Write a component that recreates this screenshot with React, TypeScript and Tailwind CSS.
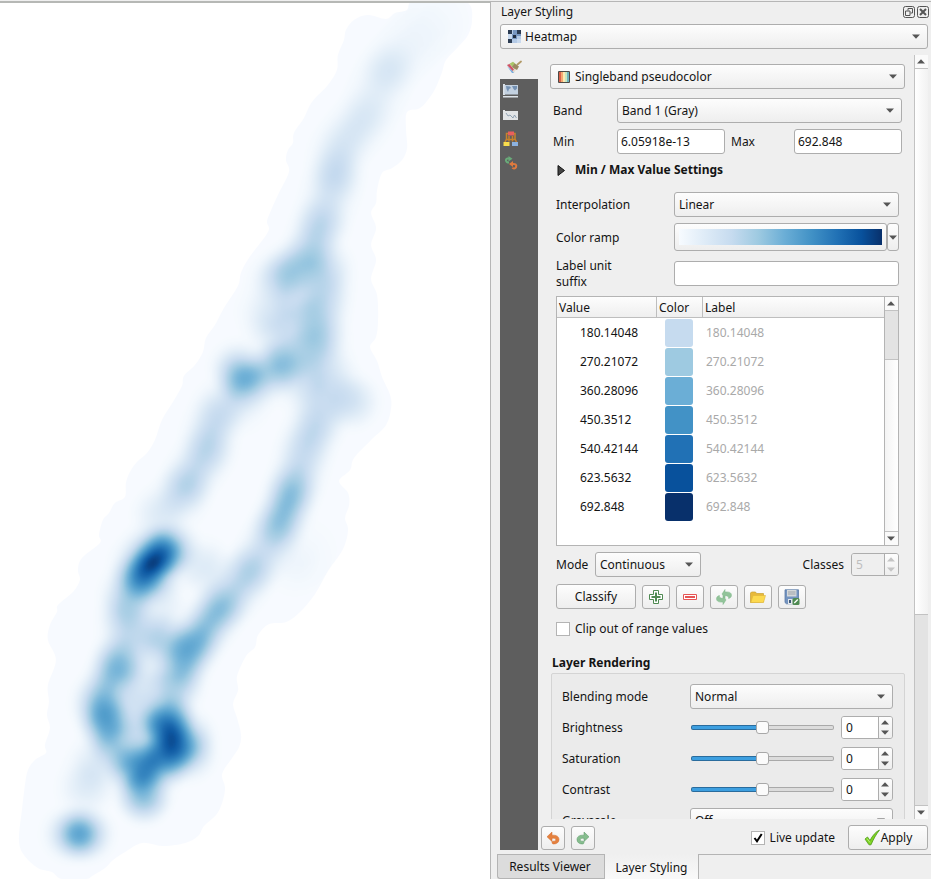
import { useId, useState } from "react";
import type { ReactNode } from "react";

/* ---------- heatmap ---------- */

type Point = [number, number];
type Sample = [number, number, number];

const KERNEL_RADIUS = 32;

// x, y and relative density (0..1) at points of the network
const TRACKS: Sample[][] = [
  [[437, 20, 0.02], [410, 45, 0.04], [388, 69, 0.16], [376, 95, 0.1], [364, 120, 0.15], [350, 135, 0.15], [338, 152, 0.19], [335, 178, 0.26], [329, 198, 0.17], [323, 217, 0.27], [316, 238, 0.29], [307, 260, 0.38], [296, 267, 0.37], [283, 276, 0.38], [274, 286, 0.22]],
  [[325, 265, 0.29], [325, 285, 0.27], [322, 305, 0.3], [319, 325, 0.33], [321, 342, 0.37], [308, 350, 0.32], [296, 356, 0.36], [281, 364, 0.42], [262, 380, 0.35]],
  [[300, 320, 0.25], [290, 325, 0.24], [265, 312, 0.14]],
  [[298, 300, 0.21]],
  [[283, 343, 0.21], [270, 335, 0.15]],
  [[237, 368, 0.4], [243, 380, 0.52], [248, 392, 0.38]],
  [[322, 358, 0.24], [328, 372, 0.2], [330, 385, 0.21], [352, 402, 0.2]],
  [[305, 378, 0.21], [308, 395, 0.17]],
  [[330, 385, 0.21], [325, 405, 0.22], [318, 422, 0.25], [308, 440, 0.27], [302, 460, 0.23], [297, 478, 0.34], [291, 493, 0.44], [285, 512, 0.45], [275, 532, 0.38], [266, 550, 0.22], [250, 571, 0.33], [238, 588, 0.29], [220, 608, 0.45], [208, 624, 0.42], [195, 643, 0.53], [182, 664, 0.5], [178, 680, 0.38], [173, 696, 0.34]],
  [[240, 405, 0.2], [222, 405, 0.22], [211, 430, 0.26], [207, 453, 0.29], [195, 470, 0.25], [185, 487, 0.33], [180, 500, 0.22], [160, 515, 0.13]],
  [[174, 548, 0.64], [163, 551, 0.84], [156, 558, 0.95], [151, 564, 1], [144, 573, 0.86], [138, 579, 0.68]],
  [[136, 566, 0.66], [150, 549, 0.66]],
  [[152, 579, 0.72], [168, 561, 0.66]],
  [[186, 556, 0.2], [205, 568, 0.11]],
  [[128, 590, 0.42], [127, 604, 0.37], [126, 630, 0.27], [147, 640, 0.27], [165, 640, 0.33]],
  [[124, 650, 0.34], [117, 666, 0.5], [111, 684, 0.4], [98, 702, 0.5], [103, 716, 0.58], [109, 733, 0.54], [118, 748, 0.36]],
  [[160, 605, 0.11]],
  [[145, 680, 0.15], [135, 715, 0.21]],
  [[168, 712, 0.58], [170, 732, 0.9], [175, 745, 0.82], [170, 757, 0.76], [160, 766, 0.7], [148, 765, 0.62], [133, 765, 0.68], [136, 780, 0.56], [144, 797, 0.48]],
  [[155, 732, 0.62], [156, 748, 0.62]],
  [[188, 735, 0.6], [189, 755, 0.56]],
  [[150, 783, 0.54]],
  [[98, 760, 0.17], [85, 790, 0.13]],
  [[70, 834, 0.46], [79, 834, 0.6], [87, 834, 0.48]],
  [[295, 565, 0.04], [305, 550, 0.03]],
];

// Fill each track in at regular steps
const SAMPLES: Sample[] = TRACKS.flatMap((track) =>
  track.flatMap((a, i) => {
    const b = track[i + 1];
    if (!b) return [a];
    const steps = Math.max(1, Math.round(Math.hypot(b[0] - a[0], b[1] - a[1]) / 8));
    return Array.from({ length: steps }, (_, k): Sample => {
      const f = k / steps;
      return [a[0] + (b[0] - a[0]) * f, a[1] + (b[1] - a[1]) * f, a[2] + (b[2] - a[2]) * f];
    });
  }),
);

const kernel = (a: Sample, b: Sample) => {
  const q = ((a[0] - b[0]) ** 2 + (a[1] - b[1]) ** 2) / KERNEL_RADIUS ** 2;
  return q < 1 ? (1 - q) ** 2 : 0;
};

// Multiplicative updates keep the weights positive and the surface smooth
const WEIGHTS: number[] = (() => {
  const K = SAMPLES.map((s) => SAMPLES.map((t) => kernel(s, t)));
  const norm = K.map((row) => row.reduce((a, b) => a + b, 0));
  let w = SAMPLES.map((s, i) => s[2] / norm[i]);
  for (let pass = 0; pass < 120; pass++) {
    const ratio = K.map((row, i) => SAMPLES[i][2] / row.reduce((a, k, j) => a + k * w[j], 0));
    w = w.map((v, i) => (v * K[i].reduce((a, k, j) => a + k * ratio[j], 0)) / norm[i]);
  }
  return w;
})();

const OUTLINE: Point[] = [
  [412, 1], [440, -8], [468, 3], [472, 20], [468, 35], [458, 47], [446, 60], [442, 72], [436, 87], [430, 97], [420, 108], [407, 112],
  [406, 130], [407, 148], [402, 160], [392, 168], [382, 173], [377, 190], [376, 203], [371, 213], [376, 228],
  [371, 245], [376, 260], [371, 279], [377, 295], [378, 320], [376, 337], [370, 347], [377, 361], [382, 377],
  [390, 395], [391, 408], [386, 425], [371, 440], [354, 458], [350, 470], [339, 481], [348, 493], [349, 505],
  [345, 518], [348, 530], [343, 549], [328, 571], [315, 594], [300, 612], [286, 622], [269, 624], [258, 635],
  [255, 647], [246, 656], [237, 676], [238, 690], [233, 704], [237, 718], [241, 735], [239, 747], [232, 758],
  [222, 774], [225, 788], [222, 803], [216, 815], [204, 826], [198, 836], [185, 843], [163, 846], [142, 843],
  [125, 852], [113, 860], [105, 868], [92, 876], [86, 879], [62, 879], [52, 872], [38, 868], [24, 855], [19, 840],
  [22, 810], [25, 785], [28, 770], [35, 760], [46, 753], [45, 745], [50, 728], [47, 715], [49, 702], [48, 685],
  [56, 660], [48, 640], [50, 625], [57, 612], [58, 605], [73, 592], [80, 580], [78, 570], [82, 558], [100, 543],
  [99, 535], [103, 520], [109, 513], [115, 503], [125, 497], [126, 483], [130, 472], [137, 462], [147, 453],
  [155, 440], [162, 420], [173, 402], [182, 386], [184, 376], [195, 365], [203, 352], [206, 338], [215, 325],
  [224, 308], [238, 286], [241, 273], [249, 258], [268, 232], [267, 222], [270, 213], [278, 195], [289, 172],
  [286, 160], [288, 150], [293, 143], [294, 133], [304, 118], [312, 102], [328, 85], [337, 70], [338, 55],
  [344, 40], [346, 30], [354, 20], [368, 15], [386, 19], [395, 13], [407, 10],
];

const outlinePath = (() => {
  const n = OUTLINE.length;
  const at = (i: number) => OUTLINE[(i + n) % n];
  let d = `M${at(0)[0]} ${at(0)[1]}`;
  for (let i = 0; i < n; i++) {
    const [p0, p1, p2, p3] = [at(i - 1), at(i), at(i + 1), at(i + 2)];
    d += `C${p1[0] + (p2[0] - p0[0]) / 6} ${p1[1] + (p2[1] - p0[1]) / 6} ${p2[0] - (p3[0] - p1[0]) / 6} ${p2[1] - (p3[1] - p1[1]) / 6} ${p2[0]} ${p2[1]}`;
  }
  return d + "Z";
})();

const STOPS = [0, 0.1, 0.2, 0.3, 0.4, 0.5, 0.6, 0.7, 0.8, 0.9, 1];

function Heatmap() {
  return (
    <svg className="block h-[876px] w-[490px] shrink-0" viewBox="0 3 490 876" role="img" aria-label="Heatmap layer">
      <defs>
        <radialGradient id="kernel">
          {STOPS.map((r) => (
            <stop key={r} offset={r} stopColor="#fff" stopOpacity={(1 - r * r) ** 2} />
          ))}
        </radialGradient>
        <clipPath id="extent">
          <path d={outlinePath} />
        </clipPath>
        <filter id="blues" x="0" y="0" width="490" height="880" filterUnits="userSpaceOnUse" colorInterpolationFilters="sRGB">
          <feGaussianBlur stdDeviation="2" />
          <feComponentTransfer>
            <feFuncR type="table" tableValues=".969 .875 .784 .639 .451 .290 .161 .055 .031" />
            <feFuncG type="table" tableValues=".984 .925 .863 .800 .702 .596 .475 .345 .188" />
            <feFuncB type="table" tableValues="1 .969 .941 .890 .847 .788 .725 .635 .420" />
          </feComponentTransfer>
        </filter>
      </defs>
      <g clipPath="url(#extent)">
        <g filter="url(#blues)">
          <rect x="-20" y="-20" width="530" height="920" fill="#000" />
          {SAMPLES.map(([x, y], i) =>
            WEIGHTS[i] > 0.004 ? (
              <circle key={i} className="mix-blend-plus-lighter" cx={x} cy={y} r={KERNEL_RADIUS} fill="url(#kernel)" opacity={WEIGHTS[i]} />
            ) : null,
          )}
        </g>
      </g>
    </svg>
  );
}

/* ---------- controls ---------- */

const FRAME = "rounded-[3px] border border-[#adadad]";
const RAISED = `${FRAME} bg-linear-to-b from-[#fdfdfd] to-[#eeeeee]`;

function Arrow({ up = false, pale = false }: { up?: boolean; pale?: boolean }) {
  return (
    <svg className={pale ? "h-[5px] w-2 text-[#c4c4c4]" : "h-[5px] w-2 text-[#555]"} viewBox="0 0 8 5" fill="currentColor" aria-hidden="true">
      <path d={up ? "M0 4.500 4 .3 8 4.500Z" : "M0 .5 4 4.700 8 .5Z"} />
    </svg>
  );
}

function Combo({ id, label, value, icon, className = "" }: { id?: string; label?: string; value: string; icon?: ReactNode; className?: string }) {
  return (
    <div className={`relative h-[25px] ${className}`}>
      <select id={id} aria-label={label} defaultValue={value} className={`block size-full appearance-none ${RAISED} ${icon ? "pl-6" : "pl-1"} pr-6`}>
        <option>{value}</option>
      </select>
      {icon && <span className="pointer-events-none absolute inset-y-0 left-2 flex items-center">{icon}</span>}
      <span className="pointer-events-none absolute inset-y-0 right-2 flex items-center">
        <Arrow />
      </span>
    </div>
  );
}

function TextBox({ id, value = "", className = "" }: { id: string; value?: string; className?: string }) {
  return <input id={id} type="text" defaultValue={value} className={`block h-[25px] min-w-0 bg-white px-[3px] ${FRAME} ${className}`} />;
}

function Spin({ id, label, value, disabled = false, className = "" }: { id?: string; label?: string; value: string; disabled?: boolean; className?: string }) {
  return (
    <div className={`flex h-[23px] overflow-hidden ${FRAME} ${className}`}>
      <input
        id={id}
        aria-label={label}
        type="text"
        disabled={disabled}
        defaultValue={value}
        className="min-w-0 flex-1 bg-white px-1 disabled:bg-[#efefef] disabled:text-[#bebebe]"
      />
      <div className="flex w-[14px] flex-col border-l border-[#adadad] bg-linear-to-b from-[#fdfdfd] to-[#eeeeee] pr-px">
        <button type="button" aria-label="Increase" disabled={disabled} className="flex flex-1 items-center justify-center">
          <Arrow up pale={disabled} />
        </button>
        <button type="button" aria-label="Decrease" disabled={disabled} className="flex flex-1 items-center justify-center">
          <Arrow pale={disabled} />
        </button>
      </div>
    </div>
  );
}

function Tick({ label, checked = false }: { label: string; checked?: boolean }) {
  const [on, setOn] = useState(checked);
  const id = useId();
  return (
    <div className="flex items-center gap-[5px]">
      <span className="relative flex size-[14px]">
        <input id={id} type="checkbox" checked={on} onChange={() => setOn(!on)} className="size-[14px] appearance-none border border-[#b4b4b4] bg-white" />
        {on && (
          <svg className="pointer-events-none absolute inset-0 size-[14px]" viewBox="0 0 14 14" fill="none" stroke="#000" strokeWidth="2" aria-hidden="true">
            <path d="M3.500 7 6 10.300 10.700 3" />
          </svg>
        )}
      </span>
      <label htmlFor={id}>{label}</label>
    </div>
  );
}

function IconButton({ label, className, children }: { label: string; className: string; children: ReactNode }) {
  return (
    <button type="button" aria-label={label} className={`flex h-6 items-center justify-center ${RAISED} ${className}`}>
      {children}
    </button>
  );
}

function ScrollButton({ up = false }: { up?: boolean }) {
  return (
    <button
      type="button"
      aria-label={up ? "Scroll up" : "Scroll down"}
      className={`flex h-[14px] shrink-0 items-center justify-center bg-[#fafafa] pr-px ${up ? "border-b border-[#c2c2c2]" : "border-t border-[#c2c2c2]"}`}
    >
      <Arrow up={up} />
    </button>
  );
}

/* ---------- icons ---------- */

const RasterIcon = () => (
  <svg className="size-[13px]" viewBox="0 0 13 13" aria-hidden="true">
    <path fill="#b4cae6" d="M0 0h13v13H0z" />
    <path fill="#2b3b52" d="M0 0h4v4H0zM9 0h4v4H9zM0 9h4v4H0z" />
    <path fill="#7796c0" d="M5 0h4v4H5zM4 4h5v5H4zM9 4h4v2H9z" />
    <path fill="#c9daef" d="M0 4h4v5H0zM9 9h4v4H9z" />
    <path fill="#1f2c40" d="M5 5h3v3H5z" />
  </svg>
);

const RampIcon = () => (
  <svg className="size-3" viewBox="0 0 12 12" aria-hidden="true">
    <path fill="#d9604a" d="M1 1h2v10H1z" />
    <path fill="#f3a972" d="M3 1h2v10H3z" />
    <path fill="#fbe9b0" d="M5 1h2v10H5z" />
    <path fill="#c5e6c0" d="M7 1h2v10H7z" />
    <path fill="#6fb4bd" d="M9 1h2v10H9z" />
    <path fill="none" stroke="#4d4a45" d="M.5.5h11v11H.5z" />
  </svg>
);

const BrushIcon = () => (
  <svg className="h-[14px] w-4" viewBox="0 0 16 14" aria-hidden="true">
    <path fill="#e3ddcf" d="M1 5 7 2l5 4-4 7z" />
    <path fill="#cf5268" d="m1 5 2.500-1L8 9.500 6.500 11z" />
    <path fill="#79acdd" d="m1 6 5.500 5L8 13H6z" />
    <path fill="#a9c66a" d="m3.500 3.700 3.500-2L12 6l-3.500 3z" />
    <path fill="none" stroke="#b19a68" strokeWidth="1.800" strokeLinecap="round" d="m11.500 4.500 3.500-3" />
    <path fill="#9c8a63" d="m8.500 3.500 4.500 3-2 3.500-5-3z" />
  </svg>
);

const TransparencyIcon = () => (
  <svg className="h-[14px] w-4" viewBox="0 0 16 14" aria-hidden="true">
    <path fill="#dde3e9" d="M0 0h2v11H0zM0 12h15v1.500H0z" />
    <path fill="#c3d1e0" d="M1.500 1H15v9.500H1.500z" />
    <path fill="#7491b3" d="m3 2 4 .5 1 1.500-2 1-1 3-1.500-3zM9 2h5v2.500L12 6.500 10.500 5z" />
  </svg>
);

const HistogramIcon = () => (
  <svg className="h-3 w-4" viewBox="0 0 16 12" aria-hidden="true">
    <path fill="#e2e4e6" d="M0 1h2v10H0zM2 2h13v9H2z" />
    <path fill="none" stroke="#7d93a8" strokeWidth=".8" d="m3 4 2 3 2-1 3 3 1.500-3 2 3" />
  </svg>
);

const PyramidIcon = () => (
  <svg className="size-4" viewBox="0 0 16 16" aria-hidden="true">
    <path fill="none" stroke="#c8822c" strokeWidth="1.500" d="M5 2.500H3.500V8L2 11M10.500 2.500H12V8l1.500 3M6 5v5.500M9.500 5v5.500M3.500 8.500H12" />
    <path fill="#ea5f5c" d="M5 .5h6v4H5z" />
    <path fill="#f7dc4c" d="M.5 11h6v4h-6z" />
    <path fill="#8cb2e0" d="M9 11h6v4H9z" />
  </svg>
);

const HistoryIcon = () => (
  <svg className="ml-px size-[14px]" viewBox="0 0 14 14" fill="none" strokeWidth="2" aria-hidden="true">
    <path stroke="#69aa79" d="M5 6.500C1.500 6.500 1 3 3.500 2.500H5" />
    <path fill="#69aa79" d="M4.500 0 8.500 2.700 4.500 5.400z" />
    <path stroke="#e07a3e" d="M8 8c3.500-.5 5 1 4 3.300-.8 1.500-3 1.500-3.500.3" />
    <path fill="#e07a3e" d="M9 5v6L5 8z" />
  </svg>
);

const PlusIcon = () => (
  <svg className="size-4" viewBox="0 0 16 16" aria-hidden="true">
    <path fill="#fff" stroke="#4f8a52" d="M5.500 1.500h5v4h4v5h-4v4h-5v-4h-4v-5h4z" />
    <path stroke="#4f8a52" strokeWidth="2" d="M8 3.500v9M3.500 8h9" />
  </svg>
);

const MinusIcon = () => (
  <svg className="size-4" viewBox="0 0 16 16" aria-hidden="true">
    <path fill="#fff" stroke="#e65555" d="M1.500 5.500h13v5h-13z" />
    <path fill="#e65555" d="M3 7h10v2H3z" />
  </svg>
);

const SwapIcon = () => (
  <svg className="size-4" viewBox="0 0 16 16" aria-hidden="true">
    <path
      fill="#92c49a"
      stroke="#7fb688"
      strokeWidth=".5"
      d="M7 15.500V13C3.500 13.500.5 12.500.5 9.800.5 7.800 2 6.800 3.500 6.600c-.6 1.800.8 2.900 3.500 2.700V6.800l3 4.200zM9 .5V3c3.500-.5 6.500.5 6.500 3.200 0 2-1.500 3-3 3.200.6-1.800-.8-2.900-3.500-2.700v2.500L6 5z"
    />
  </svg>
);

const FolderIcon = () => (
  <svg className="size-4" viewBox="0 0 16 16" aria-hidden="true">
    <path fill="#e8b93a" stroke="#c9a030" strokeWidth=".7" d="M.5 13.500V4l1-1h4l1 1.500h7V13z" />
    <path fill="#fcd94f" stroke="#dfb53a" strokeWidth=".6" d="M.8 13.500 3 6.500h12.500l-2 7z" />
  </svg>
);

const SaveIcon = () => (
  <svg className="size-4" viewBox="0 0 16 16" aria-hidden="true">
    <path fill="#7494c0" stroke="#5a7aa6" strokeWidth=".8" d="M1 .8h13.500v14H2.500L1 13.500z" />
    <path fill="#d5d8da" d="M3 1h9.500v6.500H3z" />
    <path stroke="#8f979e" strokeWidth=".8" d="M4 3h7.500M4 5h7.500" />
    <path fill="#e4e8ec" d="M4 10h6v5H4z" />
    <path fill="#3f5878" d="M5 11h2v3H5z" />
    <rect x="8.500" y="9" width="7" height="7" rx="1.500" fill="#4f8a52" />
    <path stroke="#fff" strokeWidth="1.300" d="m10.300 14 3.500-3.500" />
  </svg>
);

const UndoIcon = ({ redo = false }: { redo?: boolean }) => (
  <svg className={redo ? "size-[14px] -scale-x-100 text-[#86bd8e]" : "size-[14px] text-[#e5813f]"} viewBox="0 0 14 14" aria-hidden="true">
    <path
      fill="currentColor"
      stroke={redo ? "#559563" : "#d06a2b"}
      strokeWidth=".5"
      d="M6 1v3.200c4.500-.4 7 1.300 7 4.300 0 2.800-2.200 4.500-5.500 4.500-.9 0-1.500-.7-1.500-1.500s.6-1.300 1.400-1.300c1.500 0 2.400-.5 2.400-1.500 0-1.100-1.300-1.600-3.800-1.400v3.200L1 5.800z"
    />
  </svg>
);

const ApplyIcon = () => (
  <svg className="size-[17px]" viewBox="0 0 17 17" aria-hidden="true">
    <path fill="#7ed321" stroke="#4f9a1c" strokeWidth=".8" d="M1 10 3.500 8l2.500 3.500C8.500 6.500 11.500 3 15.500 1 12 5.500 9.500 10 7 15.800H5z" />
    <path fill="none" stroke="#b5ec7c" d="m3 9.500 3 4" />
  </svg>
);

/* ---------- panel sections ---------- */

const CLASSES: [string, string][] = [
  ["180.14048", "bg-[#c6dbef]"],
  ["270.21072", "bg-[#9ecae1]"],
  ["360.28096", "bg-[#6baed6]"],
  ["450.3512", "bg-[#4292c6]"],
  ["540.42144", "bg-[#2171b5]"],
  ["623.5632", "bg-[#08519c]"],
  ["692.848", "bg-[#08306b]"],
];

function ClassTable() {
  return (
    <div className="flex h-[250px] border border-[#b4b4b4] bg-white">
      <div className="min-w-0 flex-1 overflow-hidden">
        <table className="w-full table-fixed border-separate border-spacing-0 text-left">
          <thead className="bg-linear-to-b from-[#fdfdfd] to-[#eeeeee]">
            <tr className="h-[21px]">
              <th className="w-[100px] border-r border-b border-[#bebebe] px-[2px] pt-px font-normal">Value</th>
              <th className="w-[46px] border-r border-b border-[#bebebe] px-[2px] pt-px font-normal">Color</th>
              <th className="border-b border-[#bebebe] px-[2px] pt-px font-normal">Label</th>
            </tr>
          </thead>
          <tbody>
            {CLASSES.map(([value, swatch]) => (
              <tr key={value} className="h-[29px]">
                <td className="pl-[23px]">{value}</td>
                <td className="pt-px pl-2">
                  <div className={`size-7 rounded-[3px] ${swatch}`} />
                </td>
                <td className="pl-[3px] text-[#a9a9a9]">{value}</td>
              </tr>
            ))}
          </tbody>
        </table>
      </div>
      <div className="flex w-[14px] flex-col border-l border-[#b4b4b4]">
        <ScrollButton up />
        <div className="h-[49px] border-b border-[#c2c2c2] bg-[#e3e3e3]" />
        <div className="flex-1 bg-linear-to-r from-[#f4f4f4] to-white" />
        <ScrollButton />
      </div>
    </div>
  );
}

function SliderRow({ name }: { name: string }) {
  const [value, setValue] = useState(0);
  const id = useId();
  return (
    <div className="flex h-[23px] items-center">
      <label htmlFor={id} className="w-32">{name}</label>
      <input
        id={id}
        type="range"
        min={-100}
        max={100}
        value={value}
        onChange={(e) => setValue(Number(e.target.value))}
        className="mx-px h-[17px] min-w-0 flex-1 appearance-none bg-transparent [&::-webkit-slider-runnable-track]:h-[5px] [&::-webkit-slider-runnable-track]:rounded-[2px] [&::-webkit-slider-runnable-track]:border [&::-webkit-slider-runnable-track]:border-transparent [&::-webkit-slider-runnable-track]:bg-[linear-gradient(90deg,#3d9fe0_50%,#dcdcdc_50%),linear-gradient(90deg,#2a6c9d_50%,#a9a9a9_50%)] [&::-webkit-slider-runnable-track]:[background-clip:padding-box,border-box] [&::-webkit-slider-runnable-track]:[background-origin:border-box] [&::-webkit-slider-thumb]:mt-[-5px] [&::-webkit-slider-thumb]:size-[13px] [&::-webkit-slider-thumb]:appearance-none [&::-webkit-slider-thumb]:rounded-[3px] [&::-webkit-slider-thumb]:border [&::-webkit-slider-thumb]:border-[#a8a8a8] [&::-webkit-slider-thumb]:bg-[#fbfbfb]"
      />
      <Spin label={`${name} value`} value="0" className="ml-[6px] w-[52px]" />
    </div>
  );
}

function RendererForm() {
  return (
    <div className="min-w-0 flex-1 overflow-hidden pt-[9px] pr-[9px] pl-3">
      <Combo label="Render type" value="Singleband pseudocolor" icon={<RampIcon />} />
      <div className="mt-[9px] flex items-center pr-[3px] pl-[3px]">
        <label htmlFor="band" className="w-16">Band</label>
        <Combo id="band" value="Band 1 (Gray)" className="flex-1" />
      </div>
      <div className="mt-[6px] flex items-center pr-[3px] pl-[3px]">
        <label htmlFor="min" className="w-16">Min</label>
        <TextBox id="min" value="6.05918e-13" className="w-[108px]" />
        <label htmlFor="max" className="flex-1 pl-[6px]">Max</label>
        <TextBox id="max" value="692.848" className="w-[108px]" />
      </div>
      <button type="button" className="mt-2 flex h-4 items-center gap-[9px] pl-[7px] font-bold">
        <svg className="h-[13px] w-[9px]" viewBox="0 0 9 13" fill="#444" stroke="#111" aria-hidden="true">
          <path d="M1 1.500v10l6.500-5z" />
        </svg>
        Min / Max Value Settings
      </button>

      <div className="mt-[14px] pr-[6px] pl-[6px]">
        <div className="flex items-center">
          <label htmlFor="interpolation" className="w-[118px]">Interpolation</label>
          <Combo id="interpolation" value="Linear" className="flex-1" />
        </div>
        <div className="mt-[6px] flex h-7 items-center">
          <span className="w-[118px] pt-px">Color ramp</span>
          <button type="button" aria-label="Edit color ramp" className={`flex h-7 flex-1 px-1 py-[5px] ${RAISED}`}>
            <span className="h-4 flex-1 bg-[linear-gradient(90deg,#f7fbff_0%,#deebf7_13%,#c6dbef_26%,#9ecae1_39%,#6baed6_52%,#4292c6_65%,#2171b5_78%,#08519c_90%,#08306b_100%)]" />
          </button>
          <button type="button" aria-label="Color ramp menu" className={`flex h-7 w-3 items-center justify-center ${RAISED}`}>
            <Arrow />
          </button>
        </div>
        <div className="mt-[6px] flex h-8 items-center">
          <label htmlFor="suffix" className="w-[118px] pt-px pr-8">Label unit suffix</label>
          <TextBox id="suffix" className="flex-1" />
        </div>
        <div className="mt-[7px]">
          <ClassTable />
        </div>
        <div className="mt-[6px] flex items-center">
          <label htmlFor="mode" className="w-[39px]">Mode</label>
          <Combo id="mode" value="Continuous" className="w-[106px]" />
          <label htmlFor="classes" className="mr-[7px] ml-auto">Classes</label>
          <Spin id="classes" value="5" disabled className="w-12" />
        </div>
        <div className="mt-[7px] flex items-center gap-[6px]">
          <button type="button" className={`h-[25px] w-20 ${RAISED}`}>Classify</button>
          <IconButton label="Add value" className="w-7"><PlusIcon /></IconButton>
          <IconButton label="Remove value" className="w-7"><MinusIcon /></IconButton>
          <IconButton label="Invert ramp" className="w-7"><SwapIcon /></IconButton>
          <IconButton label="Load color map" className="w-7"><FolderIcon /></IconButton>
          <IconButton label="Save color map" className="w-7"><SaveIcon /></IconButton>
        </div>
        <div className="mt-3">
          <Tick label="Clip out of range values" />
        </div>
      </div>

      <h2 className="mt-[18px] pl-[2px] font-bold">Layer Rendering</h2>
      <div className="mt-[2px] ml-px rounded-t-[2px] border border-[#d4d4d4] bg-[#ebebeb] py-[10px] pr-[11px] pl-[10px]">
        <div className="flex items-center">
          <label htmlFor="blending" className="w-32">Blending mode</label>
          <Combo id="blending" value="Normal" className="flex-1" />
        </div>
        <div className="my-[7px] flex flex-col gap-2">
          <SliderRow name="Brightness" />
          <SliderRow name="Saturation" />
          <SliderRow name="Contrast" />
        </div>
        <div className="flex items-center">
          <label htmlFor="grayscale" className="w-32">Grayscale</label>
          <Combo id="grayscale" value="Off" className="flex-1" />
        </div>
      </div>
    </div>
  );
}

function SideTabs() {
  const tabs: [string, ReactNode][] = [
    ["Transparency", <TransparencyIcon />],
    ["Histogram", <HistogramIcon />],
    ["Pyramids", <PyramidIcon />],
    ["History", <HistoryIcon />],
  ];
  return (
    <nav className="flex w-[38px] flex-col bg-[#5e5e5e]">
      <button type="button" aria-label="Symbology" className="flex h-6 items-center bg-[#efefef] pl-[6px]">
        <BrushIcon />
      </button>
      {tabs.map(([name, icon]) => (
        <button key={name} type="button" aria-label={name} className="flex h-6 items-center pl-[3px]">
          {icon}
        </button>
      ))}
    </nav>
  );
}

export default function App() {
  return (
    <div className="flex h-screen overflow-hidden bg-[#efefef] font-['Noto_Sans',sans-serif] text-xs text-[#141414]">
      <main className="min-w-0 flex-1 overflow-hidden border-t border-[#efefef]">
        <div className="h-full border-t-2 border-[#b6b8b5] bg-white">
          <Heatmap />
        </div>
      </main>
      <aside className="mt-px flex w-[441px] shrink-0 flex-col border-t border-l border-[#b6b6b6]">
        <header className="flex h-[22px] items-center gap-[2px] pr-[2px] pb-[2px] pl-[10px]">
          <h1 className="flex-1">Layer Styling</h1>
          <button type="button" aria-label="Float panel">
            <svg className="size-3" viewBox="0 0 12 12" fill="none" stroke="#555" aria-hidden="true">
              <rect x=".5" y=".5" width="11" height="11" rx="2" />
              <path d="M5 4.500v-2h4.500V7h-2M2.500 5h4.500v4.500H2.500z" />
            </svg>
          </button>
          <button type="button" aria-label="Close panel">
            <svg className="size-3" viewBox="0 0 12 12" fill="none" stroke="#555" aria-hidden="true">
              <rect x=".5" y=".5" width="11" height="11" rx="2" />
              <path strokeWidth="2" d="m3 3 6 6M9 3 3 9" />
            </svg>
          </button>
        </header>
        <div className="pr-[3px] pl-[9px]">
          <Combo label="Layer" value="Heatmap" icon={<RasterIcon />} />
        </div>
        <div className="mt-[6px] flex min-h-0 flex-1 pr-[3px] pl-[9px]">
          <SideTabs />
          <div className="flex min-w-0 flex-1 flex-col">
            <div className="flex min-h-0 flex-1">
              <RendererForm />
              <div className="flex w-[14px] flex-col border-l border-[#c2c2c2]">
                <ScrollButton up />
                <div className="min-h-0 flex-[546] border-b border-[#c2c2c2] bg-linear-to-r from-white to-[#f2f2f2]" />
                <div className="min-h-0 flex-[190] bg-[#e3e3e3]" />
                <ScrollButton />
              </div>
            </div>
            <footer className="flex h-[31px] items-end gap-[6px] pl-[3px]">
              <IconButton label="Undo" className="w-6"><UndoIcon /></IconButton>
              <IconButton label="Redo" className="w-6"><UndoIcon redo /></IconButton>
              <div className="mr-[7px] ml-auto flex h-[25px] items-center">
                <Tick label="Live update" checked />
              </div>
              <button type="button" className={`flex h-[25px] w-20 items-center justify-center ${RAISED}`}>
                <ApplyIcon />
                Apply
              </button>
            </footer>
          </div>
        </div>
        <div role="tablist" className="mt-1 flex h-[25px] pl-[6px]">
          <button type="button" role="tab" aria-selected="false" className="w-[107px] rounded-bl-[3px] border border-r-0 border-[#b4b4b4] bg-[#dcdcdc] pr-[2px]">
            Results Viewer
          </button>
          <button type="button" role="tab" aria-selected="true" className="w-[95px] border-x border-[#b4b4b4] bg-linear-to-b from-[#efefef] to-[#f9f9f9] pt-[2px]">
            Layer Styling
          </button>
          <div className="flex-1 border-t border-[#b4b4b4]" />
        </div>
      </aside>
    </div>
  );
}
